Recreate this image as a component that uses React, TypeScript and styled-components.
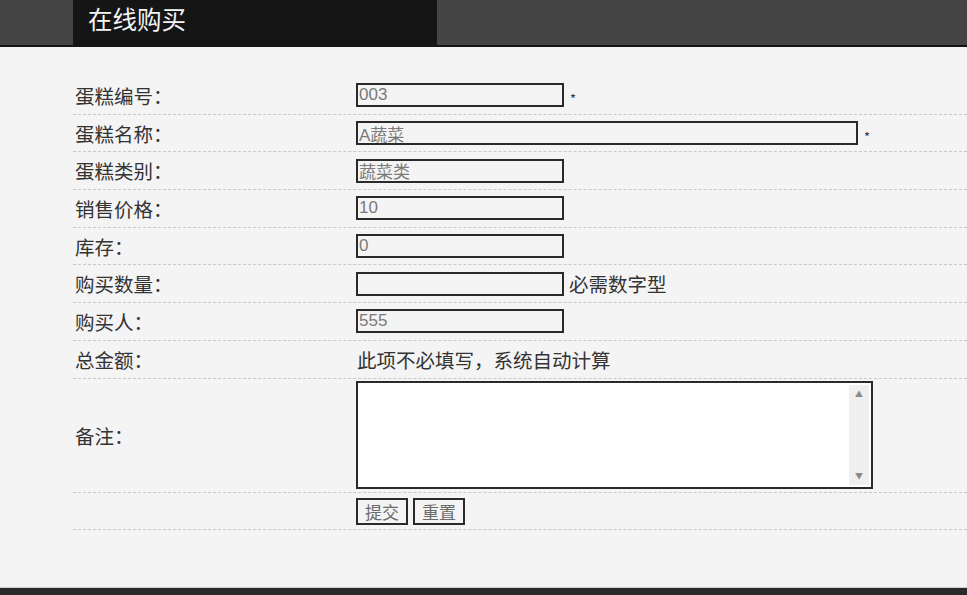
import React from 'react';
import styled, {createGlobalStyle} from "styled-components";

type FieldType = {
    label: string;
    value?: string;
    wide?: boolean;
    required?: boolean;
    hint?: string;
    plain?: string;
}

const fields: FieldType[] = [
    {label: "蛋糕编号：", value: "003", required: true},
    {label: "蛋糕名称：", value: "A蔬菜", wide: true, required: true},
    {label: "蛋糕类别：", value: "蔬菜类"},
    {label: "销售价格：", value: "10"},
    {label: "库存：", value: "0"},
    {label: "购买数量：", value: "", hint: "必需数字型"},
    {label: "购买人：", value: "555"},
    {label: "总金额：", plain: "此项不必填写，系统自动计算"},
];

const GlobalStyle = createGlobalStyle`
  html, body {
    margin: 0;
    padding: 0;
    background: #f4f4f4;
  }
  * {
    box-sizing: border-box;
  }
`

const App = () => {
    return (
        <Page>
            <GlobalStyle/>
            <Header>
                <TitleBox>在线购买</TitleBox>
            </Header>
            <Main>
                <FormTable>
                    {fields.map((field) => (
                        <Row key={field.label}>
                            <Label>{field.label}</Label>
                            <Cell>
                                {field.plain !== undefined ? (
                                    <PlainText>{field.plain}</PlainText>
                                ) : (
                                    <Input $wide={field.wide} defaultValue={field.value}/>
                                )}
                                {field.required && <Star>*</Star>}
                                {field.hint && <Hint>{field.hint}</Hint>}
                            </Cell>
                        </Row>
                    ))}
                    <Row $tall>
                        <Label>备注：</Label>
                        <Cell>
                            <TextAreaBox>
                                <TextArea/>
                                <ScrollBar>
                                    <Arrow>▲</Arrow>
                                    <Arrow>▼</Arrow>
                                </ScrollBar>
                            </TextAreaBox>
                        </Cell>
                    </Row>
                    <Row>
                        <Label/>
                        <Cell>
                            <Buttons>
                                <Button>提交</Button>
                                <Button>重置</Button>
                            </Buttons>
                        </Cell>
                    </Row>
                </FormTable>
            </Main>
            <Footer/>
        </Page>
    );
};

export default App;

const Page = styled.div`
  width: 967px;
  height: 595px;
  display: flex;
  flex-direction: column;
  overflow: hidden;
  font-family: "Noto Sans CJK SC", "Liberation Sans", sans-serif;
  color: #333333;
`
const Header = styled.div`
  height: 47px;
  background: #444444;
  border-bottom: 2px solid #141414;
  padding-left: 73px;
  display: flex;
`
const TitleBox = styled.div`
  width: 364px;
  height: 45px;
  background: #151515;
  color: #f4f4f4;
  font-size: 24.5px;
  line-height: 38px;
  padding-left: 15px;
`
const Main = styled.div`
  flex: 1;
  background: #f4f4f4;
  padding: 30px 0 0 73px;
`
const FormTable = styled.div`
  display: flex;
  flex-direction: column;
`
const Row = styled.div<{ $tall?: boolean }>`
  display: flex;
  align-items: center;
  height: ${props => props.$tall ? "114px" : "37.7px"};
  border-bottom: 1px dashed #c8c8c8;
`
const Label = styled.div`
  width: 283px;
  padding-left: 2px;
  font-size: 19.5px;
  color: #333333;
  white-space: nowrap;
`
const Cell = styled.div`
  display: flex;
  align-items: center;
  flex: 1;
`
const Input = styled.input<{ $wide?: boolean }>`
  width: ${props => props.$wide ? "502px" : "208px"};
  height: 24px;
  border: 2px solid #2a2a2a;
  background: #f4f4f4;
  color: #7a7a7a;
  font-family: "Liberation Sans", "Noto Sans CJK SC", sans-serif;
  font-size: 17px;
  padding: 0 0 0 1px;
  outline: none;
`
const Star = styled.span`
  font-size: 13px;
  color: #333355;
  margin-left: 6px;
  align-self: flex-start;
  margin-top: 6px;
`
const Hint = styled.span`
  font-size: 19.5px;
  color: #333333;
  margin-left: 5px;
  white-space: nowrap;
`
const PlainText = styled.span`
  font-size: 19.5px;
  color: #333333;
  padding-left: 1px;
  white-space: nowrap;
`
const TextAreaBox = styled.div`
  width: 517px;
  height: 108px;
  border: 2px solid #2a2a2a;
  background: #ffffff;
  display: flex;
`
const TextArea = styled.textarea`
  flex: 1;
  border: none;
  resize: none;
  outline: none;
  background: #ffffff;
`
const ScrollBar = styled.div`
  width: 20px;
  margin: 2px 2px 2px 0;
  background: #efefef;
  display: flex;
  flex-direction: column;
  justify-content: space-between;
  align-items: center;
  padding: 4px 0;
`
const Arrow = styled.span`
  font-size: 8px;
  color: #8a8a8a;
  line-height: 10px;
`
const Buttons = styled.div`
  display: flex;
  gap: 5px;
  margin-top: 2px;
`
const Button = styled.button`
  width: 52px;
  height: 27px;
  border: 2px solid #2a2a2a;
  background: #f4f4f4;
  color: #6a6a6a;
  font-family: "Noto Sans CJK SC", sans-serif;
  font-size: 17px;
  padding: 0;
  line-height: 22px;
`
const Footer = styled.div`
  height: 8px;
  background: #2a2a2a;
  border-top: 1px solid #cfcfcf;
`
